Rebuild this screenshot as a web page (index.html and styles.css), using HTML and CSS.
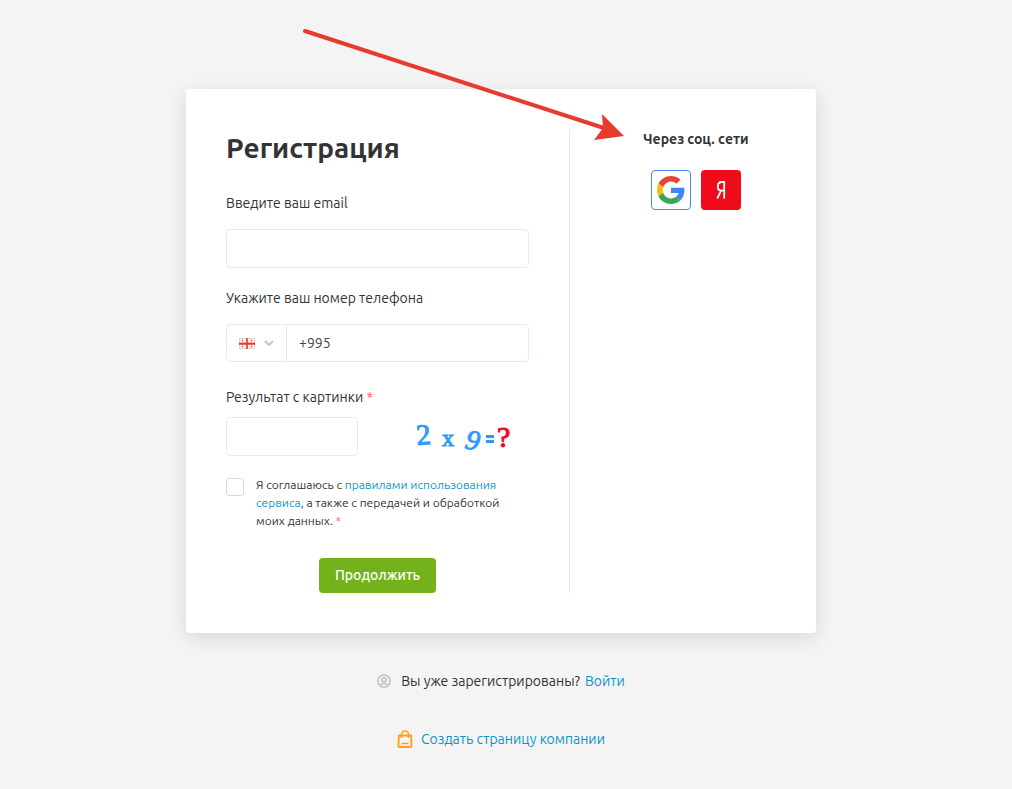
FILE: index.html
```html
<!DOCTYPE html>
<html lang="ru">
<head>
<meta charset="utf-8">
<meta name="viewport" content="width=device-width, initial-scale=1">
<title>Регистрация</title>
<link rel="stylesheet" href="styles.css">
</head>
<body>
<div class="page">
  <main class="card">
    <form class="form">
      <h1 class="title">Регистрация</h1>

      <label class="label" for="email">Введите ваш email</label>
      <input class="input" id="email" type="email">

      <label class="label" for="phone">Укажите ваш номер телефона</label>
      <div class="phone">
        <button class="country" type="button" aria-haspopup="listbox" aria-label="Страна: Грузия">
          <svg width="16" height="11" viewBox="0 0 16 11" aria-hidden="true">
            <rect x=".5" y=".5" width="15" height="10" fill="#fff" stroke="#d8d8d8"/>
            <path d="M8 0v11M0 5.500h16" stroke="#f4524e" stroke-width="2"/>
            <path d="M0 6h16" stroke="#e01814" stroke-width="1"/>
            <path d="M2.500 2.500h2M3.500 1.500v2M11.500 2.500h2M12.500 1.500v2M2.500 8.500h2M3.500 7.500v2M11.500 8.500h2M12.500 7.500v2" stroke="#f4726e"/>
          </svg>
          <svg width="10" height="6" viewBox="0 0 10 6" aria-hidden="true">
            <path d="M1 1l4 4 4-4" fill="none" stroke="#c4c4c4" stroke-width="1.800"/>
          </svg>
        </button>
        <input class="number" id="phone" type="tel" value="+995">
      </div>

      <label class="label label-captcha" for="captcha">Результат с картинки <span class="required">*</span></label>
      <div class="captcha">
        <input class="input captcha-input" id="captcha" type="text">
        <svg class="captcha-image" width="100" height="36" viewBox="0 0 100 36">
          <g fill="#2e9bfa" stroke="#2e9bfa">
            <text class="glyph glyph-large" transform="translate(4 26) rotate(-5)">2</text>
            <text class="glyph glyph-small" x="29" y="27">x</text>
            <text class="glyph glyph-slanted" transform="translate(51 29) rotate(12)">9</text>
            <path d="M73 16h8v3h-8zM73 21h8v3h-8z" stroke="none"/>
          </g>
          <text class="glyph glyph-mark" x="84" y="28" fill="#f6061f" stroke="#f6061f">?</text>
        </svg>
      </div>

      <div class="consent">
        <input class="checkbox" id="consent" type="checkbox">
        <label class="consent-text" for="consent">Я соглашаюсь с <a class="link" href="#">правилами использования сервиса</a>, а также с передачей и обработкой моих данных. <span class="required">*</span></label>
      </div>

      <button class="submit" type="submit">Продолжить</button>
    </form>

    <aside class="social">
      <h2 class="social-title">Через соц. сети</h2>
      <div class="social-list">
        <a class="social-link google" href="#" aria-label="Google">
          <svg width="28" height="28" viewBox="0 0 48 48" aria-hidden="true">
            <path fill="#ea4335" d="M24 9.500c3.540 0 6.710 1.220 9.210 3.600l6.850-6.850C35.900 2.380 30.470 0 24 0 14.620 0 6.510 5.380 2.560 13.220l7.980 6.190C12.430 13.720 17.740 9.500 24 9.500z"/>
            <path fill="#4285f4" d="M46.980 24.550c0-1.570-.15-3.090-.38-4.550H24v9.020h12.940c-.58 2.960-2.260 5.480-4.780 7.180l7.730 6c4.510-4.180 7.090-10.360 7.090-17.650z"/>
            <path fill="#fbbc05" d="M10.530 28.590c-.48-1.450-.76-2.990-.76-4.590s.27-3.140.76-4.590l-7.980-6.190C.92 16.460 0 20.120 0 24s.92 7.540 2.560 10.780l7.970-6.190z"/>
            <path fill="#34a853" d="M24 48c6.480 0 11.930-2.130 15.890-5.810l-7.730-6c-2.150 1.450-4.920 2.300-8.160 2.300-6.260 0-11.570-4.220-13.470-9.910l-7.980 6.190C6.510 42.620 14.620 48 24 48z"/>
          </svg>
        </a>
        <a class="social-link yandex" href="#" aria-label="Яндекс">
          <svg width="10" height="18" viewBox="0 0 10 18" fill="none" stroke="#fff" stroke-width="1.800" aria-hidden="true">
            <path d="M8.200 17.500V1H6C3.200 1 1.800 2.900 1.800 5.400s1.400 4.200 3.700 4.200h2.700M5 9.800L1.200 17.500"/>
          </svg>
        </a>
      </div>
    </aside>
  </main>

  <p class="footer-line">
    <svg class="user-icon" width="14" height="14" viewBox="0 0 14 14" fill="none" stroke="#c2c2c2" stroke-width="1.600" aria-hidden="true">
      <circle cx="7" cy="7" r="6.200"/>
      <circle cx="7" cy="5.600" r="2.100"/>
      <path d="M3 11.400c.8-1.600 2.200-2.200 4-2.200s3.200.6 4 2.200"/>
    </svg>
    <span>Вы уже зарегистрированы?</span>
    <a class="link login" href="#">Войти</a>
  </p>
  <p class="footer-line">
    <svg class="bag-icon" width="16" height="18" viewBox="0 0 16 18" fill="none" stroke="#ffa010" stroke-width="1.800" aria-hidden="true">
      <path d="M1.800 5.500h12.400l.3 10.600a.8.800 0 0 1-.8.900H2.300a.8.800 0 0 1-.8-.9z" stroke-linejoin="round"/>
      <path d="M4.500 8V4.600a3.500 3.500 0 0 1 7 0V8M4.500 13.500h7" stroke-width="1.500"/>
    </svg>
    <a class="link" href="#">Создать страницу компании</a>
  </p>

  <svg class="arrow" width="324" height="114" viewBox="0 0 324 114" aria-hidden="true">
    <path d="M4 3L306 101" stroke="#e63c2f" stroke-width="4" stroke-linecap="round"/>
    <path d="M301 86l22 22-30 4 9-12z" fill="#e63c2f"/>
  </svg>
</div>
</body>
</html>
```
FILE: styles.css
```css
* {
  box-sizing: border-box;
}

body {
  margin: 0;
  background: #f4f4f4;
  color: #333;
  font: 14px/20px Ubuntu, "Noto Sans", sans-serif;
}

.page {
  position: relative;
  display: flex;
  flex-direction: column;
  align-items: center;
  gap: 38px;
  padding: 89px 10px 40px 0;
}

.card {
  display: grid;
  grid-template-columns: 344fr 206fr;
  width: 100%;
  max-width: 630px;
  padding: 40px;
  border-radius: 4px;
  background: #fff;
  box-shadow: 0 5px 20px rgba(0, 0, 0, 0.12);
}

.form {
  display: flex;
  flex-direction: column;
  padding-right: 40px;
  border-right: 1px solid #e6e9ea;
}

.title {
  margin: 0 0 26px;
  font-size: 28px;
  line-height: 38px;
}

.label {
  margin-bottom: 16px;
}

.label-captcha {
  margin-bottom: 10px;
}

.required {
  color: #ff5a52;
}

.input,
.phone {
  width: 100%;
  margin: 0 0 20px;
  border: 1px solid #e6ecec;
  border-radius: 4px;
  background: #fff;
}

.input {
  height: 39px;
  padding: 0 12px;
  color: #444;
  font: inherit;
}

.phone {
  display: flex;
  height: 38px;
  margin-bottom: 25px;
}

.country {
  display: flex;
  align-items: center;
  gap: 9px;
  width: 60px;
  padding: 0 12px;
  border: 0;
  border-right: 1px solid #e6ecec;
  background: none;
}

.number {
  flex: 1;
  min-width: 0;
  padding: 0 12px;
  border: 0;
  background: none;
  color: #444;
  font: inherit;
}

.captcha {
  display: flex;
  justify-content: space-between;
  align-items: center;
  margin-bottom: 20px;
  padding-right: 16px;
}

.captcha-input {
  width: 132px;
  margin: 0;
}

.glyph {
  font-family: "Liberation Serif", serif;
  stroke-width: 1px;
}

.glyph-large {
  font-size: 29px;
}

.glyph-small {
  font-size: 24px;
}

.glyph-slanted {
  font-size: 28px;
  font-style: italic;
}

.glyph-mark {
  font-size: 30px;
}

.consent {
  display: flex;
  gap: 12px;
  margin-bottom: 28px;
}

.checkbox {
  flex: none;
  appearance: none;
  width: 18px;
  height: 18px;
  margin: 2px 0 0;
  border: 1px solid #d5dcde;
  border-radius: 3px;
  background: #fff;
}

.checkbox:checked {
  background: #74b21b;
}

.consent-text {
  font-size: 12px;
  line-height: 18px;
}

.link {
  color: #0e95c5;
  text-decoration: none;
}

.submit {
  align-self: center;
  height: 35px;
  padding: 0 16px 2px;
  border: 0;
  border-radius: 4px;
  background: #74b21b;
  color: #fff;
  font: 500 14px/20px Ubuntu, "Noto Sans", sans-serif;
}

.social {
  display: flex;
  flex-direction: column;
  align-items: center;
  gap: 21px;
  padding-left: 46px;
}

.social-title {
  margin: 0;
  font-size: 14px;
  line-height: 20px;
  white-space: nowrap;
}

.social-list {
  display: flex;
  gap: 10px;
}

.social-link {
  display: flex;
  align-items: center;
  justify-content: center;
  width: 40px;
  height: 40px;
  border-radius: 4px;
}

.google {
  border: 1px solid #4b87ee;
}

.yandex {
  background: #ef0b1a;
}

.footer-line {
  display: flex;
  align-items: center;
  margin: 0;
}

.user-icon {
  margin-right: 10px;
}

.bag-icon {
  margin-right: 8px;
}

.login {
  margin-left: 5px;
}

.arrow {
  position: absolute;
  top: 28px;
  left: calc(50% - 205px);
  pointer-events: none;
}
```
